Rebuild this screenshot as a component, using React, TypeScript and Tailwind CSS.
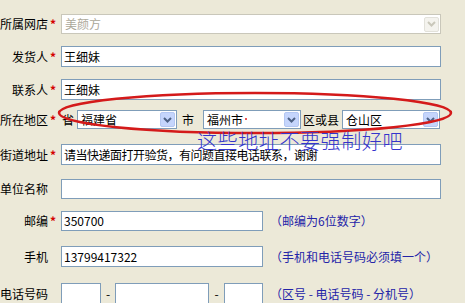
import React from "react";

const font = { fontFamily: '"Noto Sans CJK SC", "Noto Sans", sans-serif' };

function Label(props: { text: string; star?: boolean }) {
  return (
    <div className="flex items-center shrink-0">
      <div className="w-[48px] text-right whitespace-nowrap">{props.text}</div>
      <div className="w-[13px] pl-[2px] text-[#d40000] font-bold">{props.star ? "*" : ""}</div>
    </div>
  );
}

function Chevron(props: { color: string }) {
  return (
    <svg width="9" height="6" viewBox="0 0 9 6">
      <path d="M1 1 L4.5 4.5 L8 1" fill="none" stroke={props.color} strokeWidth="2" />
    </svg>
  );
}

function Select(props: { value: string; className: string; disabled?: boolean }) {
  return (
    <div
      className={
        "flex items-center border bg-white pl-[3px] pr-[1px] " +
        (props.disabled ? "border-[#c9c7ba] bg-[#ece9d8] text-[#aca899] " : "border-[#7f9db9] ") +
        props.className
      }
    >
      <div className="flex-1 whitespace-nowrap">{props.value}</div>
      <div
        className={
          "w-[15px] h-[15px] flex items-center justify-center rounded-[2px] border " +
          (props.disabled ? "bg-[#f4f3ee] border-[#e2e1da]" : "bg-[#c5d5fc] border-[#b4c7f2]")
        }
      >
        <Chevron color={props.disabled ? "#c9c7ba" : "#4d6185"} />
      </div>
    </div>
  );
}

function Input(props: { value?: string; className: string }) {
  return (
    <div
      className={
        "flex items-center border border-[#7f9db9] bg-white pl-[2px] whitespace-nowrap overflow-hidden " +
        props.className
      }
    >
      {props.value}
    </div>
  );
}

function Hint(props: { text: string }) {
  return <div className="ml-[7px] text-[#2424a8] whitespace-nowrap">{props.text}</div>;
}

export default function App() {
  return (
    <div
      className="relative w-[465px] h-[303px] overflow-hidden bg-[#ece9d8] text-[12px] leading-none text-black"
      style={font}
    >
      <div className="flex flex-col pt-[14px]">
        <div className="flex items-center h-[20px]">
          <Label text="所属网店" star />
          <Select value="美颜方" className="w-[380px] h-[20px]" disabled />
        </div>

        <div className="flex items-center h-[21px] mt-[12px]">
          <Label text="发货人" star />
          <Input value="王细妹" className="w-[380px] h-[21px]" />
        </div>

        <div className="flex items-center h-[21px] mt-[12px]">
          <Label text="联系人" star />
          <Input value="王细妹" className="w-[380px] h-[21px]" />
        </div>

        <div className="flex items-center h-[19px] mt-[10px]">
          <Label text="所在地区" star />
          <div className="w-[16px] pl-[1px]">省</div>
          <Select value="福建省" className="w-[100px] h-[19px]" />
          <div className="w-[26px] pl-[5px]">市</div>
          <Select value="福州市" className="w-[98px] h-[19px]" />
          <div className="w-[41px] pl-[2px]">区或县</div>
          <Select value="仓山区" className="w-[98px] h-[19px]" />
        </div>

        <div className="flex items-center h-[21px] mt-[15px]">
          <Label text="街道地址" star />
          <Input
            value="请当快递面打开验货，有问题直接电话联系，谢谢"
            className="w-[380px] h-[21px] tracking-[-0.5px]"
          />
        </div>

        <div className="flex items-center h-[20px] mt-[14px]">
          <Label text="单位名称" />
          <Input className="w-[380px] h-[20px]" />
        </div>

        <div className="flex items-center h-[20px] mt-[12px]">
          <Label text="邮编" star />
          <Input value="350700" className="w-[202px] h-[20px]" />
          <Hint text="（邮编为6位数字）" />
        </div>

        <div className="flex items-center h-[21px] mt-[15px]">
          <Label text="手机" />
          <Input value="13799417322" className="w-[202px] h-[21px]" />
          <Hint text="（手机和电话号码必须填一个）" />
        </div>

        <div className="flex items-center h-[21px] mt-[16px]">
          <Label text="电话号码" />
          <Input className="w-[40px] h-[21px]" />
          <div className="w-[14px] text-center">-</div>
          <Input className="w-[94px] h-[21px]" />
          <div className="w-[15px] text-center">-</div>
          <Input className="w-[39px] h-[21px]" />
          <Hint text="（区号 - 电话号码 - 分机号）" />
        </div>
      </div>

      <svg className="absolute left-0 top-0 pointer-events-none" width="465" height="303">
        <ellipse cx="255" cy="113" rx="196" ry="20" fill="none" stroke="#d41a1a" strokeWidth="2.5" />
        <circle cx="246" cy="119" r="1" fill="#e02020" />
      </svg>

      <div className="absolute left-[197px] top-[131px] text-[20px] leading-none font-light tracking-[0.6px] text-[#3434cc] whitespace-nowrap">
        这些地址不要强制好吧
      </div>
    </div>
  );
}
